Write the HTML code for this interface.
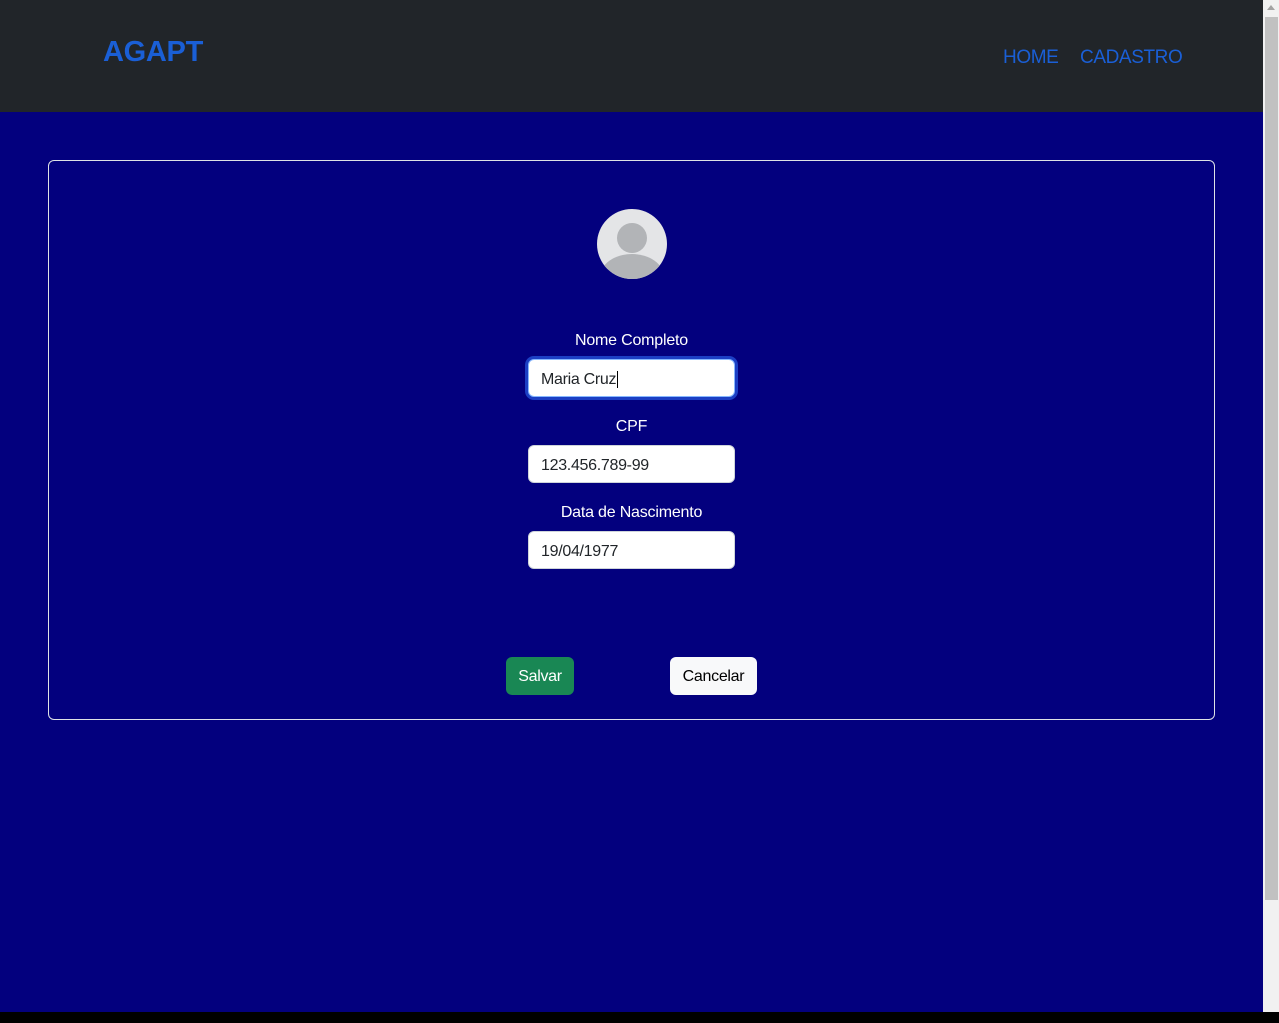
<!DOCTYPE html>
<html><head><style>
*{box-sizing:border-box;margin:0;padding:0}
body{width:1279px;height:1023px;overflow:hidden;background:#000;font-family:"Liberation Sans",sans-serif;position:relative}
.main{position:absolute;left:0;top:0;width:1263px;height:1012px;background:#03007e}
.nav{position:absolute;left:0;top:0;width:1263px;height:112px;background:#212529}
.brand{position:absolute;left:103px;top:36px;color:#1a5fd6;font-size:29px;font-weight:bold;letter-spacing:-0.3px}
.link{position:absolute;top:47px;color:#1a5fd6;font-size:19px;letter-spacing:-0.4px}
.card{position:absolute;left:48px;top:160px;width:1167px;height:560px;border:1px solid #dee2e6;border-radius:6px}
.av{position:absolute;left:597px;top:209px;width:70px;height:70px;border-radius:50%;background:#e4e5e7;overflow:hidden}
.lbl{position:absolute;left:0;width:1263px;text-align:center;color:#fff;font-size:16px;letter-spacing:-0.2px}
.inp{position:absolute;left:528px;width:207px;height:38px;background:#fff;border:1px solid #ced4da;border-radius:6px;font-size:16px;color:#212529;padding:11px 12px 0;letter-spacing:-0.3px}
.focus{box-shadow:0 0 0 3px #1c3fc4;border-color:#86b7fe}
.btn{position:absolute;top:657px;height:38px;border-radius:6px;font-size:16px;padding:11px 0 0;text-align:center;letter-spacing:-0.3px}
.sb{position:absolute;left:1263px;top:0;width:16px;height:1012px;background:#f1f1f1}
.th{position:absolute;left:1265px;top:17px;width:13px;height:883px;background:#c1c1c1}
</style></head><body>
<div class="main">
<div class="nav"><div class="brand">AGAPT</div><div class="link" style="left:1003px">HOME</div><div class="link" style="left:1080px">CADASTRO</div></div>
<div class="card"></div>
<div class="av"><svg width="70" height="70"><circle cx="35" cy="29" r="15" fill="#b2b4b7"/><ellipse cx="35" cy="68" rx="32" ry="23" fill="#b2b4b7"/></svg></div>
<div class="lbl" style="top:332px">Nome Completo</div>
<div class="inp focus" style="top:359px">Maria Cruz<span style="border-left:1px solid #000;margin-left:1px"></span></div>
<div class="lbl" style="top:418px">CPF</div>
<div class="inp" style="top:445px">123.456.789-99</div>
<div class="lbl" style="top:504px">Data de Nascimento</div>
<div class="inp" style="top:531px">19/04/1977</div>
<div class="btn" style="left:506px;width:68px;background:#198754;color:#fff">Salvar</div>
<div class="btn" style="left:670px;width:87px;background:#f8f9fa;color:#000">Cancelar</div>
</div>
<div class="sb"></div><div class="th"></div>
<div style="position:absolute;left:1267px;top:5px;width:0;height:0;border-left:4px solid transparent;border-right:4px solid transparent;border-bottom:5px solid #a3a3a3"></div>
</body></html>
